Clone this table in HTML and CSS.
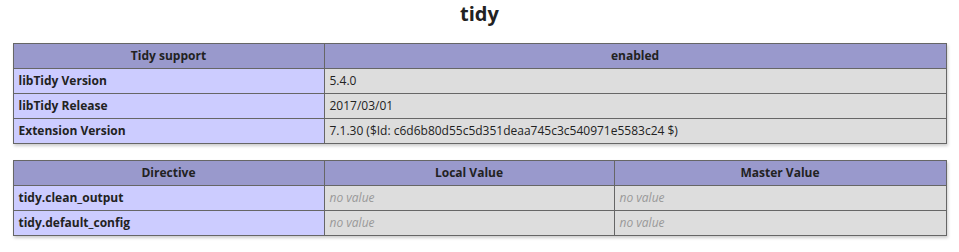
FILE: index.html
```html
<!DOCTYPE html>
<html>
<head>
<meta charset="utf-8">
<link rel="stylesheet" href="styles.css">
</head>
<body>
<div class="center">
<h2 class="title">tidy</h2>
<table class="info first">
<tr class="h"><th class="col-e">Tidy support</th><th>enabled</th></tr>
<tr><td class="e">libTidy Version </td><td class="v">5.4.0 </td></tr>
<tr><td class="e">libTidy Release </td><td class="v">2017/03/01 </td></tr>
<tr><td class="e">Extension Version </td><td class="v">7.1.30 ($Id: c6d6b80d55c5d351deaa745c3c540971e5583c24 $) </td></tr>
</table>
<table class="info">
<tr class="h"><th class="col-e">Directive</th><th class="col-local">Local Value</th><th>Master Value</th></tr>
<tr><td class="e">tidy.clean_output</td><td class="v"><i>no value</i></td><td class="v"><i>no value</i></td></tr>
<tr><td class="e">tidy.default_config</td><td class="v"><i>no value</i></td><td class="v"><i>no value</i></td></tr>
</table>
</div>
</body>
</html>
```
FILE: styles.css
```css
body {
  margin: 0 8px;
  background: #fff;
  color: #222;
  font-family: "Open Sans", "Noto Sans", sans-serif;
}
.center {
  text-align: center;
}
.title {
  font-size: 20px;
  margin: 0;
  line-height: 28px;
}
.info {
  margin: 16px auto;
  text-align: left;
  border-collapse: collapse;
  border: 0;
  width: 934px;
  box-shadow: 1px 2px 3px #ccc;
}
.info.first {
  margin-top: 15px;
}
.info td,
.info th {
  border: 1px solid #666;
  font-size: 12px;
  line-height: 16px;
  vertical-align: baseline;
  padding: 4px 5px;
}
.info th {
  text-align: center;
}
.h {
  background: #99c;
  font-weight: bold;
}
.e {
  background: #ccf;
  font-weight: bold;
}
.col-e {
  width: 300px;
}
.col-local {
  width: 279px;
}
.v {
  background: #ddd;
  word-wrap: break-word;
}
.v i {
  color: #999;
}
```
